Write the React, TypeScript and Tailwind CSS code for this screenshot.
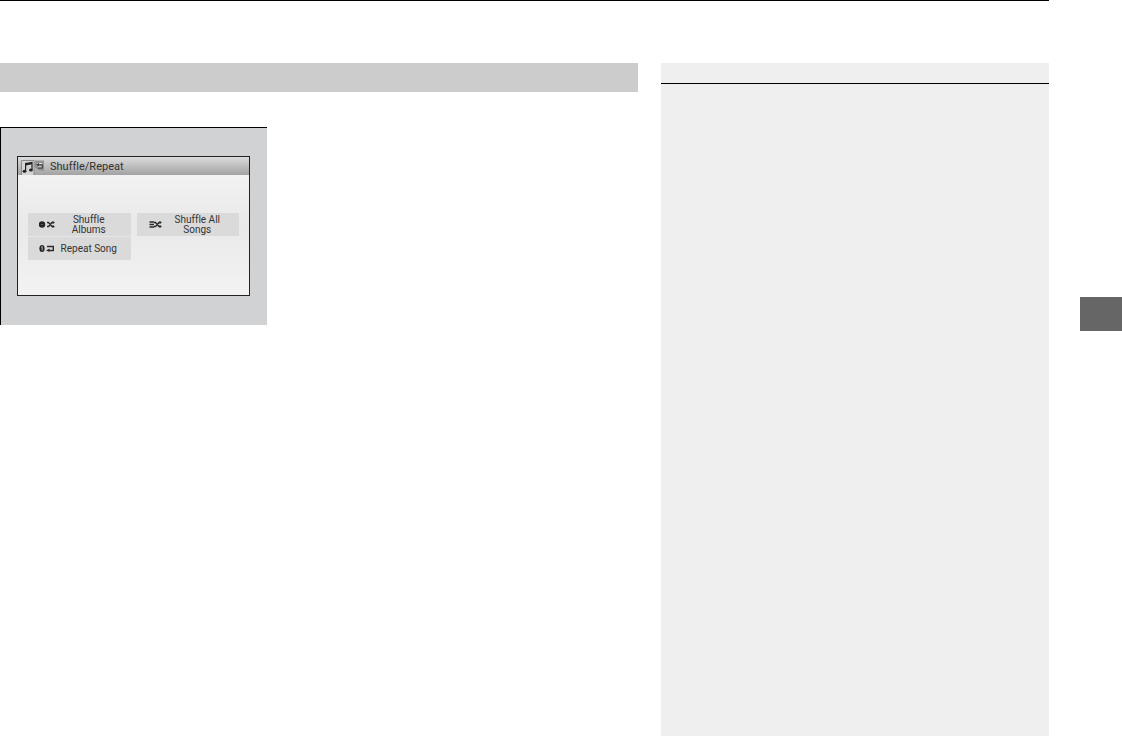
import React from 'react';

const ShuffleArrows: React.FC = () => (
  <g fill="none" stroke="#2c2c2c" strokeWidth="1.4">
    <path d="M8 1.5h1.5l3.5 4h2M8 5.5h1.5l3.5-4h2" />
    <path d="M13.5 0l2.5 1.5L13.5 3zM13.5 4l2.5 1.5L13.5 7z" fill="#2c2c2c" stroke="none" />
  </g>
);

const AlbumShuffleIcon: React.FC = () => (
  <svg viewBox="0 0 16 7" className="h-[7px] w-4" aria-hidden="true">
    <circle cx="3" cy="3.5" r="3.2" fill="#222" />
    <circle cx="3" cy="3.5" r="0.6" fill="#bbb" />
    <ShuffleArrows />
  </svg>
);

const AllShuffleIcon: React.FC = () => (
  <svg viewBox="3 0 13 7" className="h-[7px] w-[13px]" aria-hidden="true">
    <path d="M3.5 1h4.5M3.5 3.5h4.5M3.5 6h4.5" stroke="#2c2c2c" strokeWidth="1.4" />
    <ShuffleArrows />
  </svg>
);

const RepeatOneIcon: React.FC = () => (
  <svg viewBox="0 0 16 7" className="h-[7px] w-4" aria-hidden="true">
    <ellipse cx="3" cy="3.5" rx="2.6" ry="3.5" fill="#222" />
    <path d="M2.2 2.2l1-.7v4" fill="none" stroke="#ddd" strokeWidth="0.8" />
    <path d="M8 1.5h6.3v4H10" fill="none" stroke="#2c2c2c" strokeWidth="1.4" />
    <path d="M10.5 3.4V7L7 5.4z" fill="#2c2c2c" />
  </svg>
);

const MusicIcon: React.FC = () => (
  <svg viewBox="0 0 24 15" className="h-[15px] w-6" aria-hidden="true">
    <path d="M0.5 15V0.5H13V15" fill="#d4d4d4" stroke="#8a8a8a" />
    <path d="M4.6 11V3.6l6.4-1.2v7.4" fill="none" stroke="#222" strokeWidth="1.2" />
    <path d="M4.6 4.6l6.4-1.2" stroke="#222" strokeWidth="1.6" />
    <ellipse cx="3.5" cy="11.3" rx="1.9" ry="1.5" fill="#222" />
    <ellipse cx="9.9" cy="10.1" rx="1.9" ry="1.5" fill="#222" />
    <path d="M13.5 0.5H23V11l-6-1-3.5-3z" fill="#929292" />
    <path d="M16 3.5h5" stroke="#ddd" />
    <path d="M17 4.8h4.5v3.4H17" fill="none" stroke="#444" />
    <path d="M18 2.8v4L15 4.8z" fill="#444" />
    <path d="M17 6.5h3" stroke="#ccc" strokeWidth="0.8" />
  </svg>
);

interface OptionProps {
  icon: React.ReactNode;
  children: React.ReactNode;
}

const Option: React.FC<OptionProps> = ({ icon, children }) => (
  <button
    type="button"
    className="flex h-[23px] items-center rounded-[1px] bg-[#dadada] pl-[11px] text-[10px] leading-[10px] text-[#333]"
  >
    <span className="flex w-4 shrink-0 justify-center">{icon}</span>
    <span className="flex-1 whitespace-nowrap pr-2 text-center">{children}</span>
  </button>
);

const AudioScreen: React.FC = () => (
  <div className="h-[140px] w-[233px] border border-[#222] bg-linear-to-b from-[#f5f5f5] via-[#e9e9e9] to-[#f3f3f3] font-['Roboto',sans-serif] [font-variant-ligatures:none]">
    <div className="flex h-[18px] items-end bg-linear-to-b from-[#dcdcdc] to-[#a2a2a2] pl-[3px]">
      <MusicIcon />
      <h1 className="ml-[5px] text-[11px] leading-4 text-[#333]">Shuffle/Repeat</h1>
    </div>
    <div className="mt-[38px] grid grid-cols-2 gap-x-1.5 px-2.5">
      <Option icon={<AlbumShuffleIcon />}>
        Shuffle
        <br />
        Albums
      </Option>
      <Option icon={<AllShuffleIcon />}>
        Shuffle All
        <br />
        Songs
      </Option>
      <div className="grid border-t border-[#e6e6e6]">
        <Option icon={<RepeatOneIcon />}>Repeat Song</Option>
      </div>
    </div>
  </div>
);

const App: React.FC = () => {
  return (
    <div className="flex min-h-screen bg-white">
      <div className="flex flex-1 flex-col border-t border-black pt-[62px]">
        <div className="flex flex-1 gap-[23px]">
          <main className="flex-1">
            <div className="h-[29px] bg-[#cccccc]" />
            <div className="mt-[35px] h-[198px] w-[267px] border-l border-t border-black bg-[#d1d2d4] pl-4 pt-7">
              <AudioScreen />
            </div>
          </main>
          <aside className="w-[388px] bg-[#efefef]">
            <div className="h-[21px] border-b border-black" />
          </aside>
        </div>
      </div>

      {/* Section tab on the page edge */}
      <div className="ml-[31px] w-[42px] pt-[297px]">
        <div className="h-[34px] bg-[#666666]" />
      </div>
    </div>
  );
};

export default App;
